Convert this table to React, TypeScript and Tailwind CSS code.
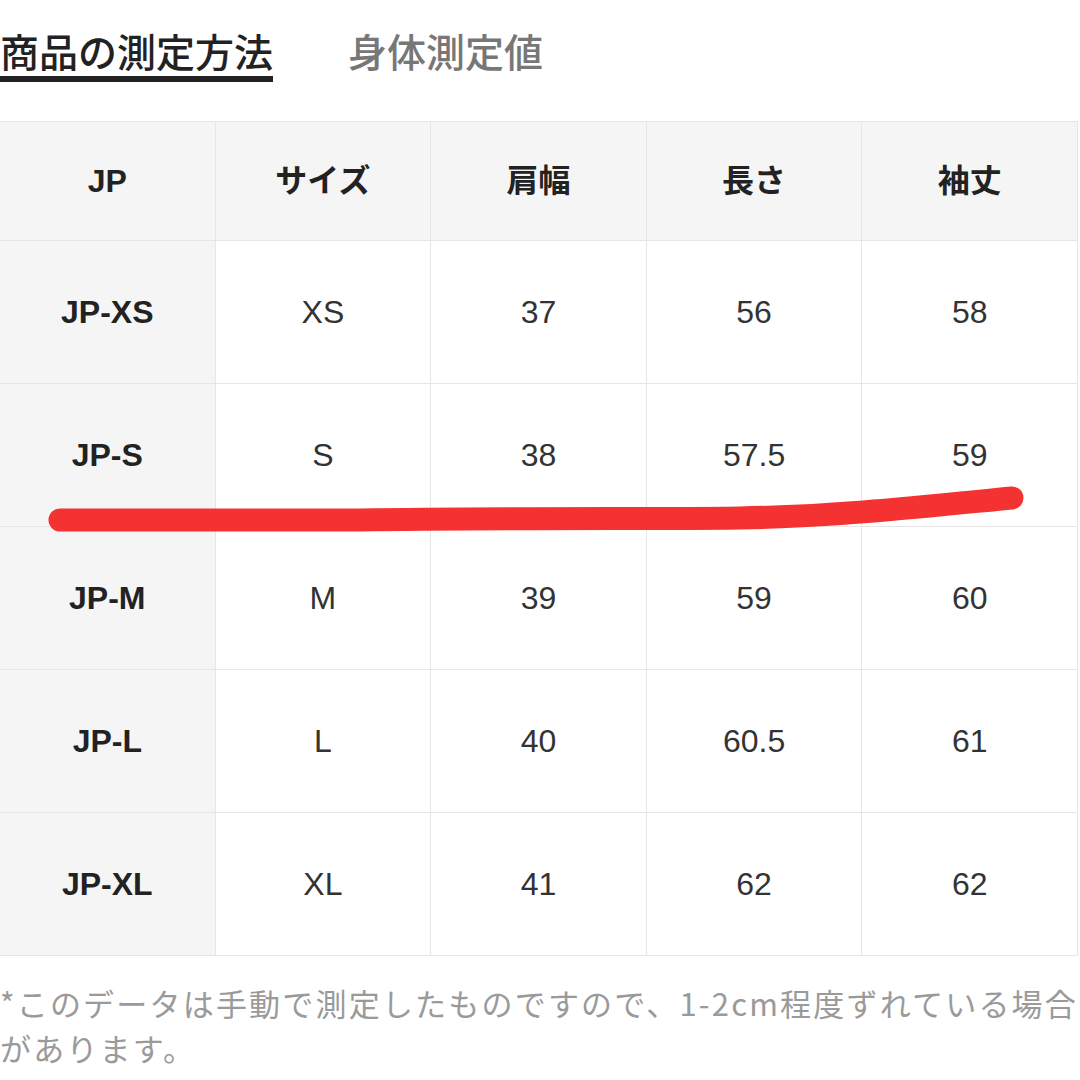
import React from 'react';

const headers = ['JP', 'サイズ', '肩幅', '長さ', '袖丈'];

const rows = [
  ['JP-XS', 'XS', '37', '56', '58'],
  ['JP-S', 'S', '38', '57.5', '59'],
  ['JP-M', 'M', '39', '59', '60'],
  ['JP-L', 'L', '40', '60.5', '61'],
  ['JP-XL', 'XL', '41', '62', '62'],
];

const font = "font-['Liberation_Sans','Noto_Sans_CJK_JP',sans-serif]";

const App = () => {
  return (
    <div className={`relative w-[1080px] h-[1080px] overflow-hidden bg-white ${font}`}>
      {/* tabs */}
      <div className="flex items-end gap-[75px] pt-[26px] font-['Noto_Sans_CJK_JP',sans-serif]">
        <div className="border-b-[6px] border-[#222] pb-[2px] text-[39px] leading-[48px] font-medium text-[#222]">
          商品の測定方法
        </div>
        <div className="pb-[8px] text-[39px] leading-[48px] font-medium text-[#777]">身体測定値</div>
      </div>

      {/* table */}
      <div className="mt-[39px] w-[1078px] border-t border-[#e6e6e6]">
        <div className="grid grid-cols-5 bg-[#f5f5f5]">
          {headers.map((h) => (
            <div
              key={h}
              className="flex h-[119px] items-center justify-center border-b border-r border-[#e6e6e6] text-[32px] font-bold text-[#222]"
            >
              {h}
            </div>
          ))}
        </div>
        {rows.map((r) => (
          <div key={r[0]} className="grid grid-cols-5">
            {r.map((c, i) => (
              <div
                key={i}
                className={`flex h-[143px] items-center justify-center border-b border-r border-[#e6e6e6] text-[32px] ${
                  i === 0 ? 'bg-[#f5f5f5] font-bold text-[#222]' : 'bg-white text-[#333]'
                }`}
              >
                {c}
              </div>
            ))}
          </div>
        ))}
      </div>

      {/* note */}
      <p className="mt-[24px] font-['Noto_Sans_CJK_JP',sans-serif] text-[31px] leading-[45px] tracking-[2.2px] whitespace-nowrap text-[#9a9a9a]">
        *このデータは手動で測定したものですので、1-2cm程度ずれている場合
        <br />
        があります。
      </p>

      {/* red marker stroke */}
      <svg className="pointer-events-none absolute left-0 top-0" width="1080" height="1080">
        <path
          d="M 60 520 L 360 520 C 500 518, 680 519, 740 518 C 840 516, 920 507, 1012 498"
          fill="none"
          stroke="#f53232"
          strokeWidth="23"
          strokeLinecap="round"
        />
      </svg>
    </div>
  );
};

export default App;
